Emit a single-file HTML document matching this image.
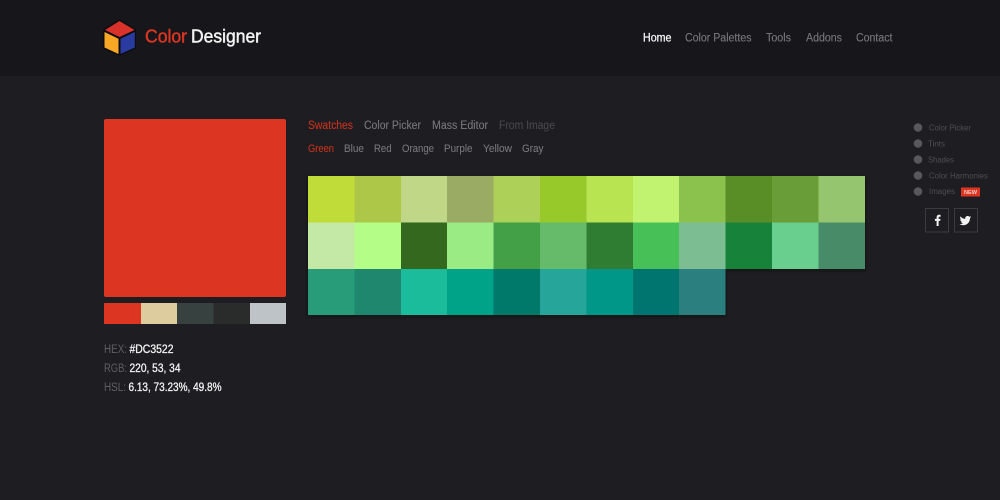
<!DOCTYPE html>
<html lang="en">
<head>
<meta charset="utf-8">
<title>Color Designer</title>
<style>
html,body{margin:0;padding:0;background:#1e1e22;width:1000px;height:500px;overflow:hidden}
svg{display:block}
text{font-family:"Liberation Sans",sans-serif}
</style>
</head>
<body>
<svg width="1000" height="500" viewBox="0 0 1000 500" xmlns="http://www.w3.org/2000/svg">
<defs>
<filter id="s" x="-5%" y="-5%" width="110%" height="110%"><feGaussianBlur stdDeviation="1.5"/></filter>
<filter id="b"><feGaussianBlur stdDeviation="0.3"/></filter>
</defs>
<rect width="1000" height="500" fill="#1e1e22"/>
<rect width="1000" height="76" fill="#17171b"/>

<!-- logo -->
<polygon points="119.500,19.500 136,29.500 136,48.500 119.500,56 103,48.500 103,29.500" fill="#0c0c10"/>
<g filter="url(#b)">
<polygon points="119.500,21 134.500,30 119.500,37 105,30" fill="#d9322a"/>
<polygon points="104.500,32 118.500,38.800 118.500,54 104.500,47.500" fill="#f9a825"/>
<polygon points="134.800,32 120.500,38.800 120.500,54 134.800,47.500" fill="#2b3a9f"/>
<text x="145" y="42.500" font-size="18" fill="#dc3522" stroke="#dc3522" stroke-width=".45" textLength="42" lengthAdjust="spacingAndGlyphs">Color</text>
<text x="191" y="42.500" font-size="18" fill="#f3f3f3" stroke="#f3f3f3" stroke-width=".45" textLength="70" lengthAdjust="spacingAndGlyphs">Designer</text>

<!-- nav -->
<g font-size="11.500" fill="#77777b" stroke="#77777b" stroke-width=".12">
<text x="643" y="41.500" fill="#f2f2f2" stroke="#f2f2f2" stroke-width=".3" textLength="28.500" lengthAdjust="spacingAndGlyphs">Home</text>
<text x="685" y="41.500" textLength="66.500" lengthAdjust="spacingAndGlyphs">Color Palettes</text>
<text x="766" y="41.500" textLength="25" lengthAdjust="spacingAndGlyphs">Tools</text>
<text x="806" y="41.500" textLength="36" lengthAdjust="spacingAndGlyphs">Addons</text>
<text x="856" y="41.500" textLength="36.500" lengthAdjust="spacingAndGlyphs">Contact</text>
</g>

<!-- tabs -->
<g font-size="11.500" fill="#77777b" stroke="#77777b" stroke-width=".1">
<text x="308" y="129" fill="#c8321f" stroke="#c8321f" textLength="45" lengthAdjust="spacingAndGlyphs">Swatches</text>
<text x="364" y="129" textLength="57" lengthAdjust="spacingAndGlyphs">Color Picker</text>
<text x="432" y="129" textLength="56" lengthAdjust="spacingAndGlyphs">Mass Editor</text>
<text x="499" y="129" fill="#47474b" stroke="#47474b" textLength="56" lengthAdjust="spacingAndGlyphs">From Image</text>
</g>
<g font-size="11" fill="#77777b" stroke="#77777b" stroke-width=".1">
<text x="308" y="152" fill="#c8321f" stroke="#c8321f" textLength="26" lengthAdjust="spacingAndGlyphs">Green</text>
<text x="344" y="152" textLength="20" lengthAdjust="spacingAndGlyphs">Blue</text>
<text x="374" y="152" textLength="17.500" lengthAdjust="spacingAndGlyphs">Red</text>
<text x="402" y="152" textLength="32" lengthAdjust="spacingAndGlyphs">Orange</text>
<text x="444" y="152" textLength="28.500" lengthAdjust="spacingAndGlyphs">Purple</text>
<text x="483" y="152" textLength="29" lengthAdjust="spacingAndGlyphs">Yellow</text>
<text x="522" y="152" textLength="21.500" lengthAdjust="spacingAndGlyphs">Gray</text>
</g>

<!-- info -->
<g font-size="11.500">
<text x="104" y="353" fill="#5f5f63" textLength="23" lengthAdjust="spacingAndGlyphs">HEX:</text>
<text x="129.500" y="353" fill="#f2f2f2" stroke="#f2f2f2" stroke-width=".3" textLength="44" lengthAdjust="spacingAndGlyphs">#DC3522</text>
<text x="104" y="372" fill="#5f5f63" textLength="23" lengthAdjust="spacingAndGlyphs">RGB:</text>
<text x="129.500" y="372" fill="#f2f2f2" stroke="#f2f2f2" stroke-width=".3" textLength="51" lengthAdjust="spacingAndGlyphs">220, 53, 34</text>
<text x="104" y="391" fill="#5f5f63" textLength="22" lengthAdjust="spacingAndGlyphs">HSL:</text>
<text x="128.500" y="391" fill="#f2f2f2" stroke="#f2f2f2" stroke-width=".3" textLength="93" lengthAdjust="spacingAndGlyphs">6.13, 73.23%, 49.8%</text>
</g>

<!-- side list -->
<g font-size="8" fill="#4d4d51">
<text x="929" y="130.500" textLength="42" lengthAdjust="spacingAndGlyphs">Color Picker</text>
<text x="928" y="146.500" textLength="17" lengthAdjust="spacingAndGlyphs">Tints</text>
<text x="928" y="162.500" textLength="26" lengthAdjust="spacingAndGlyphs">Shades</text>
<text x="929" y="178.500" textLength="59" lengthAdjust="spacingAndGlyphs">Color Harmonies</text>
<text x="929" y="194" textLength="26" lengthAdjust="spacingAndGlyphs">Images</text>
</g>
</g>

<!-- big colour -->
<rect x="104" y="119" width="182" height="178" rx="2" fill="#dc3522"/>
<rect x="104" y="303" width="37" height="21" fill="#dc3522"/>
<rect x="141" y="303" width="36" height="21" fill="#ddcd9e"/>
<rect x="177" y="303" width="36.500" height="21" fill="#374140"/>
<rect x="213.500" y="303" width="36.500" height="21" fill="#2a2c2b"/>
<rect x="250" y="303" width="36" height="21" fill="#bdc3c7"/>

<!-- swatch shadow -->
<path d="M308 176H865V269H725.500V315H308Z" fill="#0b0f0e" opacity=".55" transform="translate(0,1.500)" filter="url(#s)"/>

<g shape-rendering="crispEdges">
<!-- row 1 -->
<rect x="308" y="176" width="46.500" height="46.500" fill="#c0dc38"/>
<rect x="354.400" y="176" width="46.500" height="46.500" fill="#adc748"/>
<rect x="400.800" y="176" width="46.500" height="46.500" fill="#bfd787"/>
<rect x="447.200" y="176" width="46.500" height="46.500" fill="#9aab64"/>
<rect x="493.600" y="176" width="46.500" height="46.500" fill="#acd058"/>
<rect x="540" y="176" width="46.500" height="46.500" fill="#97c92b"/>
<rect x="586.400" y="176" width="46.500" height="46.500" fill="#b7e450"/>
<rect x="632.800" y="176" width="46.500" height="46.500" fill="#c2f370"/>
<rect x="679.200" y="176" width="46.500" height="46.500" fill="#8bc24d"/>
<rect x="725.600" y="176" width="46.500" height="46.500" fill="#598e27"/>
<rect x="772" y="176" width="46.500" height="46.500" fill="#689d37"/>
<rect x="818.400" y="176" width="46.500" height="46.500" fill="#95c66f"/>
<!-- row 2 -->
<rect x="308" y="222.300" width="46.500" height="46.700" fill="#c4e8a6"/>
<rect x="354.400" y="222.300" width="46.500" height="46.700" fill="#b4fe88"/>
<rect x="400.800" y="222.300" width="46.500" height="46.700" fill="#33681e"/>
<rect x="447.200" y="222.300" width="46.500" height="46.700" fill="#9beb84"/>
<rect x="493.600" y="222.300" width="46.500" height="46.700" fill="#43a047"/>
<rect x="540" y="222.300" width="46.500" height="46.700" fill="#66bb6a"/>
<rect x="586.400" y="222.300" width="46.500" height="46.700" fill="#2e7d32"/>
<rect x="632.800" y="222.300" width="46.500" height="46.700" fill="#48c058"/>
<rect x="679.200" y="222.300" width="46.500" height="46.700" fill="#7cbd91"/>
<rect x="725.600" y="222.300" width="46.500" height="46.700" fill="#17823a"/>
<rect x="772" y="222.300" width="46.500" height="46.700" fill="#69cf8f"/>
<rect x="818.400" y="222.300" width="46.500" height="46.700" fill="#478b68"/>
<!-- row 3 -->
<rect x="308" y="269" width="46.500" height="46" fill="#289c78"/>
<rect x="354.400" y="269" width="46.500" height="46" fill="#1f876d"/>
<rect x="400.800" y="269" width="46.500" height="46" fill="#1abc9c"/>
<rect x="447.200" y="269" width="46.500" height="46" fill="#00a388"/>
<rect x="493.600" y="269" width="46.500" height="46" fill="#00796b"/>
<rect x="540" y="269" width="46.500" height="46" fill="#26a69a"/>
<rect x="586.400" y="269" width="46.500" height="46" fill="#009688"/>
<rect x="632.800" y="269" width="46.500" height="46" fill="#00756f"/>
<rect x="679.200" y="269" width="46.500" height="46" fill="#2c7f7f"/>
</g>

<!-- side dots -->
<g fill="#58585c">
<circle cx="918" cy="127.500" r="4.300"/>
<circle cx="918" cy="143.500" r="4.300"/>
<circle cx="918" cy="159.500" r="4.300"/>
<circle cx="918" cy="175.500" r="4.300"/>
<circle cx="918" cy="191.500" r="4.300"/>
</g>
<rect x="961" y="187.500" width="19" height="9" fill="#dc3522"/>
<text x="964" y="194" font-size="5" font-weight="bold" fill="#f6c9c2" textLength="13" lengthAdjust="spacingAndGlyphs">NEW</text>

<!-- social -->
<rect x="925.500" y="208.500" width="23" height="23.500" fill="none" stroke="#3c3c40"/>
<rect x="954.500" y="208.500" width="23" height="23.500" fill="none" stroke="#3c3c40"/>
<path d="M935.600 226V220.900H933.900V218.900H935.600V217.400C935.600 215.700 936.600 214.800 938.100 214.800C938.800 214.800 939.400 214.900 939.600 214.900V216.700H938.600C937.800 216.700 937.600 217.100 937.600 217.700V218.900H939.500L939.200 220.900H937.600V226Z" fill="#f2f2f2" transform="translate(1,0)"/>
<g transform="translate(965.500,220.500) scale(.76) translate(-965.200,-221)">
<path d="M972.800 216.500C972.200 216.800 971.600 216.900 970.900 217C971.600 216.600 972.100 216 972.300 215.200C971.700 215.600 971 215.800 970.200 216C969.600 215.300 968.800 215 967.900 215C966.200 215 964.800 216.400 964.800 218.100C964.800 218.300 964.800 218.600 964.900 218.800C962.300 218.700 960 217.400 958.500 215.500C958.200 216 958.100 216.500 958.100 217.100C958.100 218.200 958.700 219.100 959.500 219.700C959 219.700 958.500 219.500 958.100 219.300C958.100 220.800 959.200 222.100 960.600 222.400C960.100 222.500 959.600 222.500 959.200 222.400C959.600 223.600 960.700 224.500 962.100 224.500C961 225.300 959.700 225.800 958.200 225.800C957.900 225.800 957.700 225.800 957.500 225.800C958.900 226.700 960.500 227.200 962.300 227.200C968 227.200 971.100 222.500 971.100 218.400C971.100 218.300 971.100 218.100 971.100 218C971.800 217.600 972.300 217.100 972.800 216.500Z" fill="#f2f2f2"/>
</g>
</svg>
</body>
</html>
